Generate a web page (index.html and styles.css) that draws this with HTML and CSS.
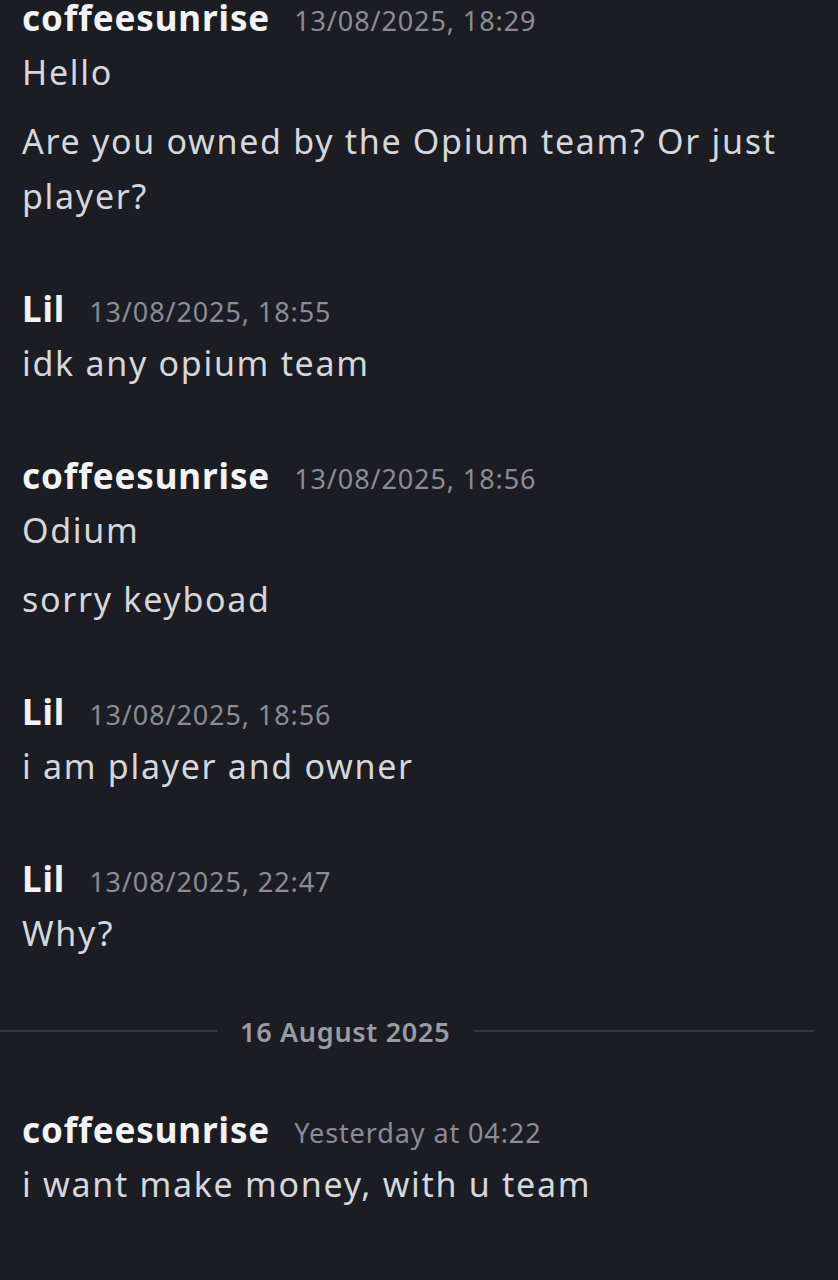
FILE: index.html
```html
<!DOCTYPE html>
<html lang="en">
<head>
    <meta charset="UTF-8">
    <meta name="viewport" content="width=device-width, initial-scale=1.0">
    <title>Direct Messages</title>
    <link rel="stylesheet" href="styles.css">
</head>
<body>
    <div class="chat">
        <div class="group">
            <div class="header"><span class="name">coffeesunrise</span><span class="time">13/08/2025, 18:29</span></div>
            <div class="msg">Hello</div>
            <div class="msg">Are you owned by the Opium team? Or just player?</div>
        </div>
        <div class="group">
            <div class="header"><span class="name">Lil</span><span class="time">13/08/2025, 18:55</span></div>
            <div class="msg">idk any opium team</div>
        </div>
        <div class="group">
            <div class="header"><span class="name">coffeesunrise</span><span class="time">13/08/2025, 18:56</span></div>
            <div class="msg">Odium</div>
            <div class="msg">sorry keyboad</div>
        </div>
        <div class="group">
            <div class="header"><span class="name">Lil</span><span class="time">13/08/2025, 18:56</span></div>
            <div class="msg">i am player and owner</div>
        </div>
        <div class="group">
            <div class="header"><span class="name">Lil</span><span class="time">13/08/2025, 22:47</span></div>
            <div class="msg">Why?</div>
        </div>

        <div class="divider">
            <span class="line line-left"></span>
            <span class="date">16 August 2025</span>
            <span class="line line-right"></span>
        </div>

        <div class="group first-after-divider">
            <div class="header"><span class="name">coffeesunrise</span><span class="time">Yesterday at 04:22</span></div>
            <div class="msg">i want make money, with u team</div>
        </div>
    </div>
</body>
</html>
```

FILE: styles.css
```css
html, body {
    margin: 0;
    padding: 0;
    background-color: #1c1d22;
}
body {
    font-family: "Noto Sans", "Liberation Sans", sans-serif;
    color: #dbdde2;
    overflow: hidden;
    height: 1280px;
}
.chat {
    display: flex;
    flex-direction: column;
    padding: 0 22px;
    margin-top: -10px;
}
.group {
    display: flex;
    flex-direction: column;
    margin-top: 57px;
}
.group:first-child {
    margin-top: 0;
}
.group.first-after-divider {
    margin-top: 0;
}
.header {
    display: flex;
    align-items: baseline;
    height: 55px;
    line-height: 55px;
    white-space: nowrap;
}
.name {
    font-size: 35px;
    font-weight: 700;
    letter-spacing: 0.9px;
    color: #f2f3f5;
    margin-right: 24px;
}
.time {
    font-size: 27px;
    letter-spacing: 0.9px;
    color: #8b8c95;
}
.msg {
    font-size: 34px;
    font-weight: 400;
    letter-spacing: 1.7px;
    line-height: 55px;
    color: #d5d7dc;
}
.msg + .msg {
    margin-top: 14px;
}
.divider {
    display: flex;
    align-items: center;
    height: 40px;
    margin: 50px 2px 51px -22px;
}
.line {
    height: 2px;
    background-color: #36373e;
}
.line-left {
    width: 217px;
}
.line-right {
    flex: 1;
}
.date {
    margin: 0 24px 0 23px;
    font-size: 27px;
    font-weight: 600;
    letter-spacing: 0.7px;
    color: #9a9ba4;
}
```
